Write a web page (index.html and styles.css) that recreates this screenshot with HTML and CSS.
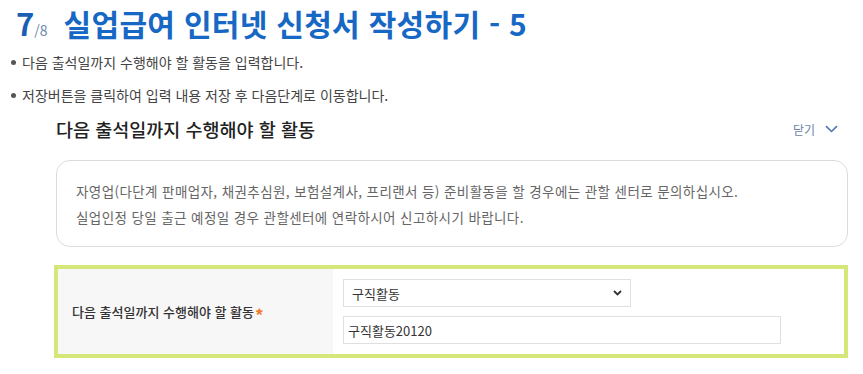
FILE: index.html
```html
<!DOCTYPE html>
<html lang="ko">
<head>
<meta charset="utf-8">
<link rel="stylesheet" href="styles.css">
</head>
<body>
<div class="page">
  <h1 class="title"><span class="step">7</span><span class="total">/8</span><span class="title-text">실업급여 인터넷 신청서 작성하기 - 5</span></h1>
  <ul class="bullets">
    <li>다음 출석일까지 수행해야 할 활동을 입력합니다.</li>
    <li>저장버튼을 클릭하여 입력 내용 저장 후 다음단계로 이동합니다.</li>
  </ul>
  <section class="section">
    <div class="section-head">
      <h2 class="section-title">다음 출석일까지 수행해야 할 활동</h2>
      <span class="toggle">닫기 <svg class="chev" width="13" height="8" viewBox="0 0 13 8"><path d="M1 1.2 L6.5 6.5 L12 1.2" fill="none" stroke="#4f74b8" stroke-width="1.6"/></svg></span>
    </div>
    <div class="notice">
      <p>자영업(다단계 판매업자, 채권추심원, 보험설계사, 프리랜서 등) 준비활동을 할 경우에는 관할 센터로 문의하십시오.</p>
      <p>실업인정 당일 출근 예정일 경우 관할센터에 연락하시어 신고하시기 바랍니다.</p>
    </div>
    <div class="form-box">
      <div class="label-cell">다음 출석일까지 수행해야 할 활동<span class="req">*</span></div>
      <div class="field-cell">
        <div class="select">
          <span>구직활동</span>
          <svg width="9" height="6" viewBox="0 0 9 6"><path d="M1 1 L4.5 4.5 L8 1" fill="none" stroke="#333" stroke-width="1.8"/></svg>
        </div>
        <div class="input">구직활동20120</div>
      </div>
    </div>
  </section>
</div>
</body>
</html>
```

FILE: styles.css
```css
* { box-sizing: border-box; }
html, body { margin: 0; padding: 0; background: #fff; }
body {
  font-family: "Noto Sans CJK KR", "Noto Sans", sans-serif;
  color: #333;
  width: 863px;
  height: 374px;
  overflow: hidden;
}
.page { padding: 0; }
.title {
  margin: 0;
  padding: 3px 0 0 16px;
  height: 46px;
  display: flex;
  align-items: baseline;
  font-weight: 700;
  color: #1466c0;
  line-height: 40px;
}
.step { font-size: 31px; color: #1a5fb4; }
.total { font-size: 14px; font-weight: 400; color: #6f87b0; margin-left: 0; }
.title-text { font-size: 30px; margin-left: 16px; color: #1768c4; letter-spacing: 0.3px; }
.bullets {
  list-style: none;
  margin: 0;
  padding: 0 0 0 11px;
  font-size: 14px;
  color: #444;
}
.bullets li { height: 33px; line-height: 33px; }
.bullets li::before {
  content: "";
  display: inline-block;
  width: 5px;
  height: 5px;
  border-radius: 50%;
  background: #555;
  margin-right: 6px;
  vertical-align: 3px;
}
.section { margin: -6px 15px 0 54px; }
.section-head {
  display: flex;
  align-items: center;
  justify-content: space-between;
  height: 46px;
  padding: 0 10px 0 2px;
}
.section-title { margin: 0; font-size: 18.5px; font-weight: 500; color: #222; }
.toggle { font-size: 12px; color: #6b7fa6; display: flex; align-items: center; gap: 10px; }
.notice {
  margin: 8px 0 0 2px;
  height: 87px;
  border: 1px solid #dcdcdc;
  border-radius: 14px;
  padding: 17px 19px;
  font-size: 13.5px;
  letter-spacing: 0.4px;
  color: #666;
}
.notice p { margin: 0; line-height: 26px; }
.form-box {
  margin-top: 18px;
  height: 93px;
  border: 4px solid #d6e779;
  display: flex;
}
.label-cell {
  width: 275px;
  background: #f7f7f7;
  display: flex;
  align-items: center;
  padding-left: 14px;
  font-size: 13px;
  font-weight: 500;
  color: #333;
}
.req {
  color: #f07a2a;
  margin-left: 1px;
  font-size: 17px;
  font-weight: 700;
  line-height: 1;
  position: relative;
  top: 3px;
}
.field-cell {
  flex: 1;
  padding: 10px 0 0 10px;
  display: flex;
  flex-direction: column;
  gap: 9px;
}
.select, .input {
  height: 28px;
  border: 1px solid #dfdfdf;
  background: #fff;
  font-size: 13px;
  color: #333;
  display: flex;
  align-items: center;
}
.select { width: 288px; padding: 0 8px; justify-content: space-between; }
.input { width: 438px; padding: 0 4px; }
```
